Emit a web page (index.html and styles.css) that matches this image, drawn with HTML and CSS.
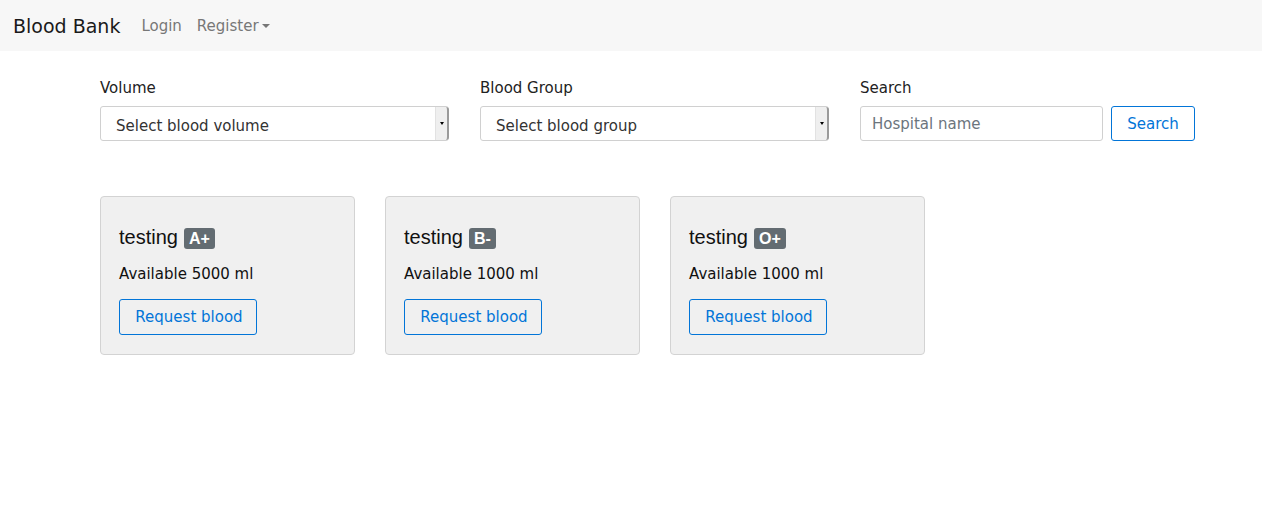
FILE: index.html
```html
<!DOCTYPE html>
<html lang="en">
<head>
<meta charset="utf-8">
<title>Blood Bank</title>
<link rel="stylesheet" href="styles.css">
</head>
<body>
<nav class="navbar">
  <a class="brand" href="#">Blood Bank</a>
  <ul class="nav">
    <li><a href="#">Login</a></li>
    <li><a href="#">Register<span class="caret"></span></a></li>
  </ul>
</nav>
<main class="page">
  <form class="filters">
    <div class="field">
      <label class="label">Volume</label>
      <div class="select-wrap">
        <select class="select"><option>Select blood volume</option></select>
      </div>
    </div>
    <div class="field">
      <label class="label">Blood Group</label>
      <div class="select-wrap">
        <select class="select"><option>Select blood group</option></select>
      </div>
    </div>
    <div class="field">
      <label class="label">Search</label>
      <div class="search-row">
        <input class="input" type="text" placeholder="Hospital name">
        <button class="btn" type="button">Search</button>
      </div>
    </div>
  </form>
  <section class="cards">
    <div class="card">
      <h4 class="card-title">testing <span class="badge">A+</span></h4>
      <p class="card-text">Available 5000 ml</p>
      <button class="btn btn-req" type="button">Request blood</button>
    </div>
    <div class="card">
      <h4 class="card-title">testing <span class="badge">B-</span></h4>
      <p class="card-text">Available 1000 ml</p>
      <button class="btn btn-req" type="button">Request blood</button>
    </div>
    <div class="card">
      <h4 class="card-title">testing <span class="badge">O+</span></h4>
      <p class="card-text">Available 1000 ml</p>
      <button class="btn btn-req" type="button">Request blood</button>
    </div>
  </section>
</main>
</body>
</html>
```
FILE: styles.css
```css
* { box-sizing: border-box; }
body {
  margin: 0;
  font-family: "DejaVu Sans", Verdana, sans-serif;
  font-size: 15px;
  color: #212529;
  background: #fff;
}
.navbar {
  height: 51px;
  background: #f7f7f7;
  display: flex;
  align-items: center;
  padding: 0 13px;
}
.brand {
  font-size: 19px;
  color: #1a1a1a;
  text-decoration: none;
  margin-right: 21px;
}
.nav {
  list-style: none;
  margin: 0;
  padding: 0;
  display: flex;
  gap: 15px;
}
.nav a {
  color: #777;
  text-decoration: none;
  font-size: 15px;
}
.caret {
  display: inline-block;
  width: 0;
  height: 0;
  margin-left: 3px;
  vertical-align: middle;
  border-top: 4px solid #777;
  border-left: 4px solid transparent;
  border-right: 4px solid transparent;
}
.page {
  padding: 28px 0 0 100px;
}
.filters {
  display: grid;
  grid-template-columns: 350px 350px 335px;
  column-gap: 30px;
}
.label {
  display: block;
  font-size: 15px;
  color: #222;
  margin-bottom: 9px;
  line-height: 18px;
}
.select-wrap {
  position: relative;
  width: 349px;
  height: 35px;
}
.select {
  appearance: none;
  -webkit-appearance: none;
  width: 100%;
  height: 35px;
  border: 1px solid #d0d0d0;
  border-radius: 3px;
  background: #fff;
  font-family: "DejaVu Sans", Verdana, sans-serif;
  font-size: 15px;
  color: #333;
  padding: 4px 15px 0;
}
.select-wrap::after {
  content: "";
  position: absolute;
  right: 0;
  top: 1px;
  bottom: 1px;
  width: 11px;
  background: #efefef;
  border-left: 1px solid #e2e2e2;
  border-right: 2px solid #9a9a9a;
  border-radius: 0 3px 3px 0;
}
.select-wrap::before {
  content: "";
  position: absolute;
  z-index: 1;
  right: 5px;
  top: 16px;
  border-top: 3px solid #000;
  border-left: 2.5px solid transparent;
  border-right: 2.5px solid transparent;
}
.search-row {
  display: flex;
  gap: 8px;
}
.input {
  width: 243px;
  height: 35px;
  border: 1px solid #d0d0d0;
  border-radius: 3px;
  padding: 0 11px;
  font-family: "DejaVu Sans", Verdana, sans-serif;
  font-size: 15px;
  color: #333;
}
.input::placeholder { color: #6c757d; }
.btn {
  height: 35px;
  padding: 0 15px;
  background: transparent;
  border: 1px solid #0275d8;
  border-radius: 3px;
  color: #0275d8;
  font-family: "DejaVu Sans", Verdana, sans-serif;
  font-size: 15px;
  width: 84px;
}
.cards {
  display: flex;
  gap: 30px;
  margin-top: 55px;
}
.card {
  width: 255px;
  height: 159px;
  background: #f0f0f0;
  border: 1px solid #d3d3d3;
  border-radius: 4px;
  padding: 28px 18px 18px;
}
.card-title {
  margin: 0;
  font-family: "Liberation Sans", Arial, sans-serif;
  font-weight: normal;
  font-size: 20px;
  line-height: 24px;
  color: #111;
  display: flex;
  align-items: center;
  gap: 6px;
}
.badge {
  display: inline-block;
  background: #636c72;
  color: #fff;
  font-family: "Liberation Sans", Arial, sans-serif;
  font-weight: bold;
  font-size: 16px;
  line-height: 21px;
  height: 21px;
  padding: 0 5px;
  border-radius: 3px;
  margin-top: 2px;
}
.card-text {
  margin: 16px 0 16px;
  font-size: 15px;
  line-height: 18px;
  color: #111;
}
.btn-req {
  width: 138px;
  height: 36px;
  padding: 0 0 0 2px;
}
```
